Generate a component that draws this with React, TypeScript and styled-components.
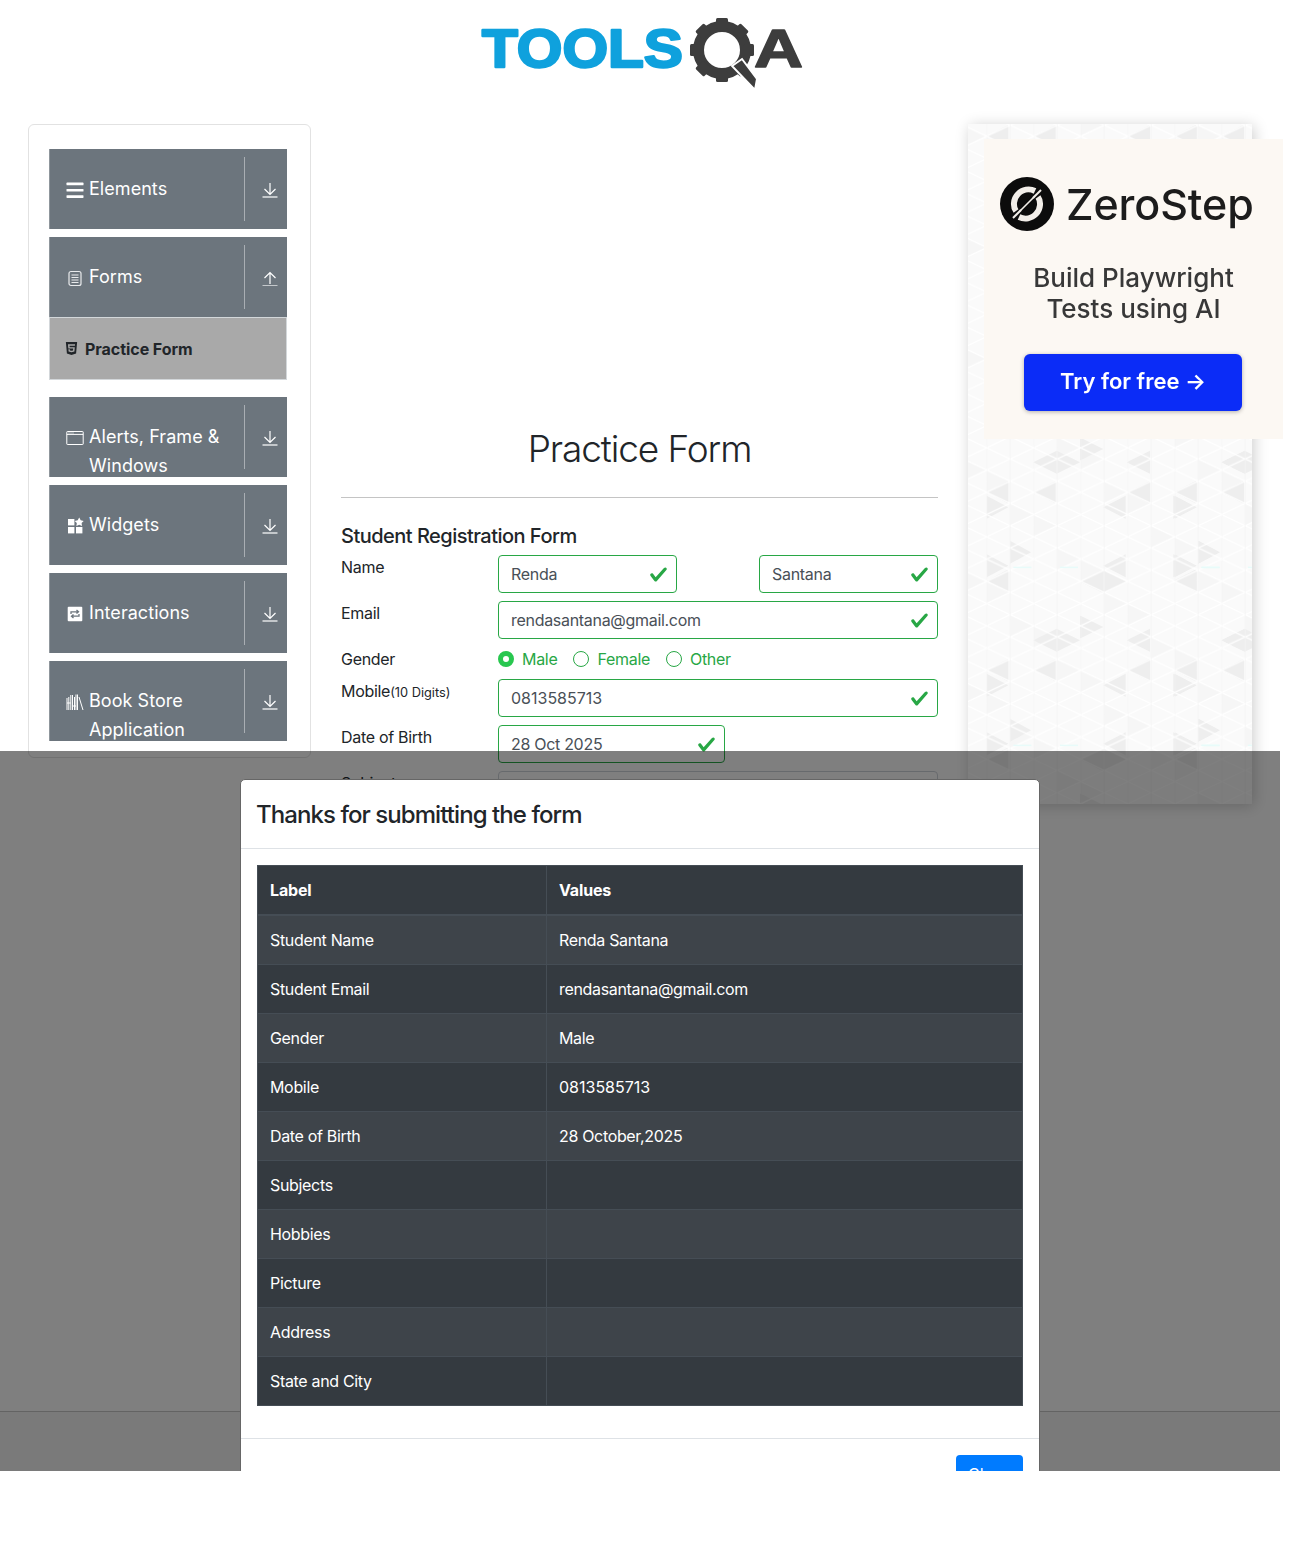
import React from 'react';
import styled, { createGlobalStyle } from 'styled-components';
import { FaHtml5 } from 'react-icons/fa';

const Global = createGlobalStyle`
  html, body { margin: 0; padding: 0; background: #fff; }
  body { font-family: Inter, "Liberation Sans", Arial, sans-serif; font-size: 16px; line-height: 24px; color: #212529; }
  * { box-sizing: border-box; }
`;

const Viewport = styled.div`position: relative; width: 1311px; height: 1471px; overflow: hidden; background: #fff;`;
const Header = styled.header`width: 1280px; height: 124px; display: flex; justify-content: center; align-items: flex-start;`;
const Main = styled.main`display: grid; grid-template-columns: 283px 597px 284px; column-gap: 30px; padding-left: 28px; height: 1287px; align-items: start;`;
const Footer = styled.footer`width: 1280px; height: 60px; background: #f4f4f4; border-top: 1px solid #c6c6c6;`;

const SideCard = styled.aside`width: 283px; height: 634px; background: #fff; border: 1px solid #e2e2e2; border-radius: 6px; padding: 24px 23px 0 20px; display: flex; flex-direction: column; gap: 8px;`;
const Group = styled.div`display: flex; flex-direction: column;`;
const MenuItem = styled.div`height: 80px; background: #6c757d; border-left: 1px solid #8f969c; color: #fff; display: flex; align-items: flex-start; overflow: hidden;`;
const IconSlot = styled.span`width: 20px; height: 18px; margin: 32px 4px 0 15px; flex: none; display: flex; align-items: center; justify-content: center;`;
const MenuLabel = styled.span`width: 155px; flex: none; padding-top: 25px; font-size: 18px; line-height: 29px; letter-spacing: .05px;`;
const Divider = styled.span`width: 1px; height: 64px; margin-top: 8px; background: #a9aeb3; flex: none;`;
const ArrowSlot = styled.span`margin: 33px 0 0 17px; height: 16px; flex: none; display: flex;`;
const SubItem = styled.div`height: 63px; margin-bottom: 9px; background: #a9a9a9; border: 1px solid #d3d7da; display: flex; align-items: center; padding-left: 14px; gap: 6px; font-weight: 700; font-size: 16px; letter-spacing: -.05px;`;
const SubIcon = styled(FaHtml5)`flex: none; color: #212529;`;

const Center = styled.section`padding-top: 299px;`;
const Title = styled.h1`margin: 0; text-align: center; font-size: 37px; font-weight: 300; line-height: 52px; letter-spacing: -1.1px; color: #212529;`;
const Rule = styled.hr`margin: 22px 0 0; border: 0; border-top: 1px solid #c4c4c4;`;
const FormTitle = styled.h5`margin: 25px 0 0; font-size: 20px; font-weight: 500; line-height: 26px; height: 32px; letter-spacing: -.52px; color: #212529;`;
const Row = styled.div`display: grid; grid-template-columns: 157px 1fr; margin-bottom: 8px; letter-spacing: -.3px;`;
const Label = styled.div`line-height: 24px;`;
const Small = styled.small`font-size: 12.8px; letter-spacing: 0;`;
const Digits = styled.span`letter-spacing: 0;`;
const Fields = styled.div`display: flex; justify-content: space-between;`;
const Field = styled.div<{ $w?: number }>`
  width: ${p => (p.$w ? `${p.$w}px` : '100%')}; height: 38px; border: 1px solid #28a745; border-radius: 4px;
  display: flex; align-items: center; justify-content: space-between; padding: 0 8px 0 12px; color: #495057; background: #fff;
`;
const EmptyField = styled.div`height: 38px; border: 1px solid #ced4da; border-radius: 4px;`;
const RadioRow = styled.div`display: flex; align-items: center; height: 24px;`;
const Radio = styled.span<{ $on?: boolean }>`
  width: 16px; height: 16px; border-radius: 50%; flex: none; margin-right: 8px; background: #fff;
  border: ${p => (p.$on ? '5px solid #28c74f' : '1px solid #28a745')};
`;
const RadioText = styled.span<{ $gap: number }>`color: #28a745; margin-right: ${p => p.$gap}px;`;

const Ad = styled.div`position: relative; width: 284px; height: 680px; background: #fafafa; box-shadow: 2px 2px 14px rgba(0,0,0,.2); padding: 15px 0 0 16px;`;
const AdPattern = styled.svg`position: absolute; inset: 0; width: 100%; height: 100%; filter: blur(.5px);`;
const Promo = styled.div`position: relative; width: 299px; height: 300px; background: #fcf8f3; padding: 38px 0 0 16px; filter: blur(.35px);`;
const Brand = styled.div`display: flex; align-items: center; gap: 12px; height: 54px;`;
const BrandName = styled.span`font-size: 43px; font-weight: 500; color: #1c1c1c; line-height: 54px; letter-spacing: -.1px;`;
const Tagline = styled.div`width: 267px; margin-top: 31px; text-align: center; font-size: 26px; font-weight: 500; line-height: 31px; color: #383838;`;
const Cta = styled.div`width: 218px; height: 57px; margin: 30px 0 0 24px; padding-bottom: 3px; border-radius: 6px; background: #0b2cf7; color: #fff; font-size: 22px; font-weight: 600; display: flex; align-items: center; justify-content: center; box-shadow: 0 1px 4px rgba(0,0,0,.3);`;

const Overlay = styled.div`position: absolute; left: 0; width: 1280px; top: 751px; bottom: 0; background: rgba(0,0,0,.5); overflow: hidden; display: flex; justify-content: center; padding-top: 28px;`;
const Modal = styled.div`width: 800px; height: 740px; flex: none; background: #fff; border: 1px solid #666; border-radius: 5px 5px 0 0; display: flex; flex-direction: column;`;
const ModalHead = styled.div`height: 69px; border-bottom: 1px solid #dee2e6; padding: 2px 15px 0; display: flex; align-items: center;`;
const ModalTitle = styled.div`font-size: 24px; font-weight: 500; line-height: 36px; letter-spacing: -.93px; color: #212529;`;
const ModalBody = styled.div`padding: 16px 16px 32px;`;
const Table = styled.table`width: 766px; table-layout: fixed; border-collapse: collapse; background: #343a40; color: #fff;`;
const Th = styled.th`text-align: left; font-weight: 700; padding: 11px 12px; border: 1px solid #454d55; border-bottom-width: 2px; height: 49px; letter-spacing: -.15px;`;
const Td = styled.td`padding: 12px; border: 1px solid #454d55; height: 49px; font-weight: 400; letter-spacing: -.33px;`;
const Tr = styled.tr<{ $odd: boolean }>`background: ${p => (p.$odd ? '#3e444a' : 'transparent')};`;
const ModalFoot = styled.div`border-top: 1px solid #dee2e6; padding: 16px; display: flex; justify-content: flex-end;`;
const CloseBtn = styled.button`height: 38px; padding: 0 12px; background: #007bff; color: #fff; border: 0; border-radius: 4px; font: inherit;`;

const Check = () => (
  <svg width="19" height="19" viewBox="0 0 8 8" fill="#28a745"><path d="M2.3 6.73L.6 4.53c-.4-.54.46-1.4 1.1-.8l1.1 1.4 3.4-3.8c.6-.63 1.6-.27 1.2.7l-4 4.6c-.43.5-.8.4-1.1.1z" /></svg>
);

const Arrow = ({ up }: { up?: boolean }) => (
  <svg width="16" height="16" viewBox="0 0 16 16" fill="none" stroke="#fff" strokeWidth="1.2">
    <path d={up ? 'M0.5 16h15' : 'M0.5 15h15'} />
    {up ? <path d="M8 14V2.5M2.5 8L8 2.500 13.5 8" /> : <path d="M8 1v11.5M2.5 7L8 12.5 13.5 7" />}
  </svg>
);

const IconBars = () => (
  <svg width="18" height="18" viewBox="0 0 18 18" fill="#fff"><rect x="0.5" y="1.6" width="17" height="2.7" rx=".6" /><rect x="0.5" y="7.9" width="17" height="2.7" rx=".6" /><rect x="0.5" y="14.2" width="17" height="2.7" rx=".6" /></svg>
);
const IconDoc = () => (
  <svg width="18" height="18" viewBox="0 0 18 18" fill="none" stroke="#e8eaec"><rect x="3" y="2.5" width="12" height="14" rx="2" strokeWidth="1.2" /><path d="M5.5 6h7M5.5 8.5h7M5.5 11h7M5.5 13.5h7" strokeWidth="1" /></svg>
);
const IconWindow = () => (
  <svg width="18" height="18" viewBox="0 0 18 18" fill="none" stroke="#fff" strokeWidth="1"><rect x="0.8" y="2.5" width="16.4" height="13" rx=".6" /><path d="M0.8 5.4h16.4" /><path d="M2.5 4h1M4.5 4h1M6.5 4h1" /></svg>
);
const IconWidgets = () => (
  <svg width="18" height="18" viewBox="0 0 18 18" fill="#fff"><rect x="2" y="2" width="6.4" height="6.4" /><rect x="2" y="10" width="6.4" height="6.4" /><rect x="10" y="10" width="6.4" height="6.4" /><path d="M13.2 .6l1.500 2.700 3 .6-2.100 2.200.4 3-2.800-1.300-2.800 1.300.4-3-2.100-2.200 3-.6z" /></svg>
);
const IconSwap = () => (
  <svg width="18" height="18" viewBox="0 0 18 18"><rect x="1.7" y="1.7" width="14.6" height="14.6" rx="1" fill="#fff" /><path d="M5 9V6.8h7M10.5 5l2 1.8-2 1.8M13 9v2.2H6M7.500 13l-2-1.800 2-1.800" fill="none" stroke="#6c757d" strokeWidth="1.300" /></svg>
);
const IconBooks = () => (
  <svg width="18" height="18" viewBox="0 0 18 18" fill="none" stroke="#fff" strokeWidth="1"><path d="M1 5v12M2.800 4v13M4.800 2v15M6.500 2v15M8.500 4v13M10 1.500v15.500M11.500 1.500v15.500M13 4l4 13" /><path d="M1 10h3.800M6.500 13h3.500" /></svg>
);

const gearTeeth = [0, 45, 90, 135, 180, 225, 270, 315];
const Logo = () => (
  <svg width="330" height="96" viewBox="0 0 330 96">
    <text x="7" y="66.500" fontFamily="'Liberation Sans', Arial, sans-serif" fontWeight="700" fontSize="54" fill="#0fa1dd" stroke="#0fa1dd" strokeWidth="2.400" strokeLinejoin="round" textLength="201" lengthAdjust="spacingAndGlyphs">TOOLS</text>
    <g fill="#3d3d3d">
      <circle cx="247" cy="50" r="23.5" fill="none" stroke="#3d3d3d" strokeWidth="11" />
      {gearTeeth.map(a => (
        <rect key={a} x="241" y="18" width="12" height="11" rx="1.500" transform={`rotate(${a} 247 50)`} />
      ))}
      <path d="M257 66L267 59 282 79 280 90z" stroke="#fff" strokeWidth="2" />
      <text x="279" y="66.500" fontFamily="'Liberation Sans', Arial, sans-serif" fontWeight="700" fontSize="54" stroke="#3d3d3d" strokeWidth="1.500" strokeLinejoin="round" textLength="49" lengthAdjust="spacingAndGlyphs">A</text>
    </g>
  </svg>
);

const ZeroMark = () => (
  <svg width="54" height="54" viewBox="0 0 54 54" style={{ flex: 'none' }}>
    <circle cx="27" cy="27" r="27" fill="#0c0c0c" />
    <path d="M35 14a15 15 0 0 0-17 3c-5 5-5 13-2 17M19 40a15 15 0 0 0 17-3c5-5 5-13 2-17" fill="none" stroke="#f2eee9" strokeWidth="6" />
    <path d="M13 41L41 13" stroke="#f2eee9" strokeWidth="2" />
    <path d="M21 33L33 21" stroke="#0c0c0c" strokeWidth="5" />
    <path d="M20 34L34 20" stroke="#f2eee9" strokeWidth="1.600" />
  </svg>
);

// Dark triangles of the ad's backdrop: [base x, centre y, tip x], in 3x units of the 188x178 tile.
const darkTris: [number, number, number][] = [
  [290, 100, 220], [290, 100, 360], [570, 100, 500], [855, 100, 785], [360, 60, 430],
  [145, 190, 80], [287, 190, 220], [570, 190, 500], [710, 190, 640], [852, 190, 785],
  [80, 235, 145], [497, 235, 430], [640, 235, 710],
  [150, 370, 213], [715, 370, 780], [80, 410, 145], [640, 410, 710], [497, 410, 430],
  [145, 455, 80], [430, 458, 360], [430, 458, 500], [710, 455, 640],
];
const tris: string[] = [];
const streaks: [number, number][] = [];
for (let i = 0; i < 2; i++) {
  for (let j = -2; j < 3; j++) {
    const ox = i * 188 - 8;
    const oy = j * 178 + 305;
    darkTris.forEach(([b, c, t]) => {
      const bx = b / 3 + ox;
      const tx = t / 3 + ox;
      const cy = c / 3 + oy;
      tris.push(`${bx},${cy - 11.5} ${bx},${cy + 11.5} ${tx},${cy}`);
    });
    [160, 300, 725].forEach(x => streaks.push([x / 3 + ox, 413 / 3 + oy]));
  }
}
const faintTris: string[] = [];
for (let c = -1; c < 13; c++) {
  for (let r = -1; r < 32; r++) {
    if ((c * 7 + r * 3) % 5 !== 0) continue;
    const x = 18.67 + c * 23.5;
    const y = 12.33 + r * 22.25 + (c % 2 === 0 ? 0 : 11.125);
    faintTris.push(`${x},${y} ${x},${y + 22.25} ${x + 23.5},${y + 11.125}`);
  }
}

const rows: [string, React.ReactNode, string][] = [
  ['Student Name', 'Renda Santana', ''],
  ['Student Email', 'rendasantana@gmail.com', ''],
  ['Gender', 'Male', ''],
  ['Mobile', <Digits>0813585713</Digits>, ''],
  ['Date of Birth', '28 October,2025', ''],
  ['Subjects', '', ''],
  ['Hobbies', '', ''],
  ['Picture', '', ''],
  ['Address', '', ''],
  ['State and City', '', ''],
];

const menuRest = [
  { label: 'Alerts, Frame & Windows', icon: <IconWindow /> },
  { label: 'Widgets', icon: <IconWidgets /> },
  { label: 'Interactions', icon: <IconSwap /> },
  { label: 'Book Store Application', icon: <IconBooks /> },
];

export default function App() {
  return (
    <Viewport>
      <Global />
      <Header><Logo /></Header>
      <Main>
        <SideCard>
          <MenuItem>
            <IconSlot><IconBars /></IconSlot>
            <MenuLabel>Elements</MenuLabel>
            <Divider />
            <ArrowSlot><Arrow /></ArrowSlot>
          </MenuItem>
          <Group>
            <MenuItem>
              <IconSlot><IconDoc /></IconSlot>
              <MenuLabel>Forms</MenuLabel>
              <Divider />
              <ArrowSlot><Arrow up /></ArrowSlot>
            </MenuItem>
            <SubItem><SubIcon size={15} />Practice Form</SubItem>
          </Group>
          {menuRest.map(m => (
            <MenuItem key={m.label}>
              <IconSlot>{m.icon}</IconSlot>
              <MenuLabel>{m.label}</MenuLabel>
              <Divider />
              <ArrowSlot><Arrow /></ArrowSlot>
            </MenuItem>
          ))}
        </SideCard>

        <Center>
          <Title>Practice Form</Title>
          <Rule />
          <FormTitle>Student Registration Form</FormTitle>
          <Row>
            <Label>Name</Label>
            <Fields>
              <Field $w={179}>Renda<Check /></Field>
              <Field $w={179}>Santana<Check /></Field>
            </Fields>
          </Row>
          <Row>
            <Label>Email</Label>
            <Field>rendasantana@gmail.com<Check /></Field>
          </Row>
          <Row>
            <Label>Gender</Label>
            <RadioRow>
              <Radio $on /><RadioText $gap={16}>Male</RadioText>
              <Radio /><RadioText $gap={16}>Female</RadioText>
              <Radio /><RadioText $gap={0}>Other</RadioText>
            </RadioRow>
          </Row>
          <Row>
            <Label>Mobile<Small>(10 Digits)</Small></Label>
            <Field><Digits>0813585713</Digits><Check /></Field>
          </Row>
          <Row>
            <Label>Date of Birth</Label>
            <Field $w={227}>28 Oct 2025<Check /></Field>
          </Row>
          <Row>
            <Label>Subjects</Label>
            <EmptyField />
          </Row>
        </Center>

        <Ad>
          <AdPattern viewBox="0 0 284 680" preserveAspectRatio="none">
            <defs>
              <pattern id="lattice" x="18.67" y="12.33" width="47" height="44.500" patternUnits="userSpaceOnUse">
                <path d="M0 0L23.500 11.100 47 0M0 22.250L23.500 11.100 47 22.250M0 22.250L23.500 33.400 47 22.250M0 44.500L23.500 33.400 47 44.500" stroke="#fff" strokeWidth="1.200" fill="none" />
                <path d="M0 0V44.500M23.500 0V44.500" stroke="#f4f4f4" strokeWidth=".7" />
              </pattern>
            </defs>
            <g fill="#f6f6f6">{faintTris.map((t, i) => <polygon key={i} points={t} />)}</g>
            <g fill="#eeeeee">{tris.map((t, i) => <polygon key={i} points={t} />)}</g>
            <rect width="284" height="680" fill="url(#lattice)" />
            <g fill="#e8fbfa">{streaks.map(([x, y], i) => <rect key={i} x={x} y={y} width="18" height="1.500" />)}</g>
          </AdPattern>
          <Promo>
            <Brand><ZeroMark /><BrandName>ZeroStep</BrandName></Brand>
            <Tagline>Build Playwright<br />Tests using AI</Tagline>
            <Cta>Try for free →</Cta>
          </Promo>
        </Ad>
      </Main>
      <Footer />

      <Overlay>
        <Modal>
          <ModalHead><ModalTitle>Thanks for submitting the form</ModalTitle></ModalHead>
          <ModalBody>
            <Table>
              <colgroup><col width="289" /><col /></colgroup>
              <thead><tr><Th>Label</Th><Th>Values</Th></tr></thead>
              <tbody>
                {rows.map((r, i) => (
                  <Tr key={r[0]} $odd={i % 2 === 0}><Td>{r[0]}</Td><Td>{r[1]}</Td></Tr>
                ))}
              </tbody>
            </Table>
          </ModalBody>
          <ModalFoot><CloseBtn>Close</CloseBtn></ModalFoot>
        </Modal>
      </Overlay>
    </Viewport>
  );
}
